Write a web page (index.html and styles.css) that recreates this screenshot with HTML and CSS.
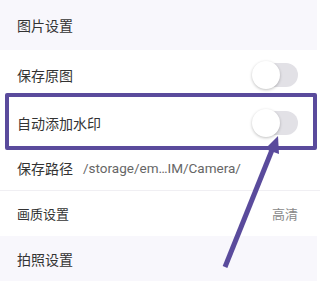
FILE: index.html
```html
<!DOCTYPE html>
<html lang="zh">
<head>
<meta charset="utf-8">
<link rel="stylesheet" href="styles.css">
</head>
<body>
<div class="page">
  <div class="header h1">图片设置</div>
  <div class="row r1">
    <span class="label">保存原图</span>
    <span class="toggle"><span class="track"></span><span class="knob"></span></span>
  </div>
  <div class="row r2">
    <span class="label">自动添加水印</span>
    <span class="toggle"><span class="track"></span><span class="knob"></span></span>
  </div>
  <div class="row r3">
    <span class="label">保存路径</span>
    <span class="path">/storage/em…IM/Camera/</span>
  </div>
  <div class="row r4">
    <span class="label small">画质设置</span>
    <span class="value">高清</span>
  </div>
  <div class="header h2">拍照设置</div>

  <div class="highlight"></div>
  <svg class="arrow" width="320" height="290" viewBox="0 0 320 290">
    <line x1="225" y1="267" x2="272" y2="150" stroke="#5a4b9c" stroke-width="5"/>
    <polygon points="278,136 265,149 279,154" fill="#5a4b9c"/>
  </svg>
</div>
</body>
</html>
```
FILE: styles.css
```css
html, body {
  margin: 0;
  padding: 0;
  background: #ffffff;
}
.page {
  position: relative;
  width: 320px;
  height: 290px;
  overflow: hidden;
  font-family: "Noto Sans CJK SC", "Noto Sans", sans-serif;
  color: #333333;
}
.header {
  display: flex;
  align-items: center;
  margin-right: 3px;
  padding-left: 17px;
  background: #f8f7fc;
  font-size: 14px;
}
.h1 { height: 50px; }
.h2 { height: 45px; }
.row {
  display: flex;
  align-items: center;
  justify-content: space-between;
  padding: 0 22px 0 17px;
  font-size: 14px;
}
.r1 { height: 50px; }
.r2 { height: 46px; }
.r3 {
  height: 44px;
  justify-content: flex-start;
  gap: 10px;
  border-bottom: 1px solid #f0eff3;
}
.r4 { height: 45px; }
.label.small { font-size: 13px; }
.path {
  font-family: "Roboto", "Noto Sans", sans-serif;
  color: #666666;
  font-size: 13.5px;
}
.value {
  color: #888888;
  font-size: 13px;
}
.toggle {
  position: relative;
  width: 46px;
  height: 28px;
}
.track {
  position: absolute;
  right: 0;
  top: 2px;
  width: 38px;
  height: 24px;
  border-radius: 12px;
  background: #e2e1e6;
}
.knob {
  position: absolute;
  left: 0;
  top: 0;
  width: 28px;
  height: 28px;
  border-radius: 50%;
  background: #ffffff;
  box-shadow: 0 1px 3px rgba(0, 0, 0, 0.25);
}
.highlight {
  position: absolute;
  left: 5px;
  top: 93px;
  width: 304px;
  height: 49px;
  border: 4px solid #5a4b9c;
  border-radius: 2px;
}
.arrow {
  position: absolute;
  left: 0;
  top: 0;
}
```
